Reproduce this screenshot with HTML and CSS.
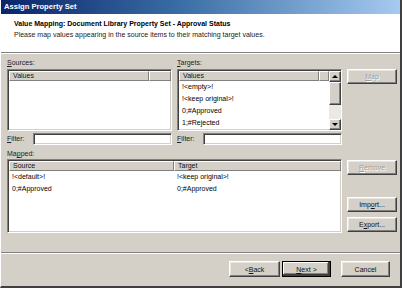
FILE: index.html
```html
<!DOCTYPE html>
<html>
	<head>
		<meta charset="utf-8">
		<title>Assign Property Set</title>
		<link rel="stylesheet" href="styles.css">
	</head>
	<body>
		<div class="window">
			<div class="titlebar">Assign Property Set</div>

			<div class="header">
				<div class="header-title">Value Mapping: Document Library Property Set - Approval Status</div>
				<div class="header-desc">Please map values appearing in the source items to their matching target values.</div>
			</div>

			<div class="content">
				<div class="label"><u>S</u>ources:</div>
				<div class="label"><u>T</u>argets:</div>
				<div></div>

				<div class="listbox">
					<div class="list-head">
						<div class="col" style="width: 140px">Values</div>
						<div class="col col-fill"></div>
					</div>
				</div>
				<div class="listbox listbox-scroll">
					<div class="list-main">
						<div class="list-head">
							<div class="col" style="width: 140px">Values</div>
							<div class="col col-fill"></div>
						</div>
						<div class="rows">
							<div class="row">!&lt;empty&gt;!</div>
							<div class="row">!&lt;keep original&gt;!</div>
							<div class="row">0;#Approved</div>
							<div class="row">1;#Rejected</div>
							<div class="row">0;#Pending</div>
						</div>
					</div>
					<div class="scrollbar">
						<div class="sb-btn"><span class="tri-up"></span></div>
						<div class="sb-thumb"></div>
						<div class="sb-track"></div>
						<div class="sb-btn"><span class="tri-down"></span></div>
					</div>
				</div>
				<div class="side">
					<div class="btn btn-side disabled"><u>M</u>ap</div>
				</div>

				<div class="filter">
					<span class="filter-label"><u>F</u>ilter:</span>
					<div class="input"></div>
				</div>
				<div class="filter">
					<span class="filter-label"><u>F</u>ilter:</span>
					<div class="input"></div>
				</div>
				<div></div>

				<div class="label label-mapped">Ma<u>p</u>ped:</div>
				<div></div>

				<div class="listbox mapped">
					<div class="list-head">
						<div class="col" style="width: 165px">Source</div>
						<div class="col col-fill">Target</div>
					</div>
					<div class="maprow">
						<div class="cell">!&lt;default&gt;!</div>
						<div class="cell">!&lt;keep original&gt;!</div>
					</div>
					<div class="maprow">
						<div class="cell">0;#Approved</div>
						<div class="cell">0;#Approved</div>
					</div>
				</div>
				<div class="side side-mapped">
					<div class="btn btn-side disabled"><u>R</u>emove</div>
					<div class="btn btn-side btn-import">Imp<u>o</u>rt...</div>
					<div class="btn btn-side">E<u>x</u>port...</div>
				</div>
			</div>

			<div class="footer">
				<div class="btn btn-foot btn-back">&lt; <u>B</u>ack</div>
				<div class="btn btn-foot btn-default"><u>N</u>ext &gt;</div>
				<div class="btn btn-foot btn-cancel">Cancel</div>
			</div>
		</div>
	</body>
</html>
```

FILE: styles.css
```css
* {
	margin: 0;
	padding: 0;
	box-sizing: border-box;
}
body {
	width: 402px;
	height: 288px;
	overflow: hidden;
	font-family: "Liberation Sans", Arial, sans-serif;
	font-size: 7px;
	color: #000;
	background-color: #d4d0c8;
}
.window {
	width: 402px;
	height: 288px;
	display: flex;
	flex-direction: column;
	background-color: #d4d0c8;
	border-right: 2px solid #404040;
	border-bottom: 2px solid #404040;
	border-left: 1px solid #fff;
}
.titlebar {
	height: 14px;
	flex: none;
	padding-left: 3px;
	line-height: 14px;
	font-size: 7.6px;
	font-weight: bold;
	color: #fff;
	background: linear-gradient(to right, #0a246a, #3a6ea5 45%, #a6caf0);
}
.header {
	height: 39px;
	flex: none;
	padding: 5px 0 0 13px;
	background-color: #fff;
	border-bottom: 1px solid #808080;
	box-shadow: 0 1px 0 #fff;
}
.header-title {
	font-weight: bold;
	line-height: 10px;
}
.header-desc {
	line-height: 11px;
	color: #222;
}

/* main area */
.content {
	flex: 1;
	display: grid;
	grid-template-columns: 165px 165px 50px;
	grid-template-rows: 12px 62px 18px 10px 74px;
	column-gap: 5px;
	padding: 4px 0 0 6px;
}
.label {
	line-height: 12px;
	color: #222;
}
.label-mapped {
	grid-column: 1 / 3;
	line-height: 9px;
}
.listbox {
	background-color: #fff;
	border: 1px solid;
	border-color: #808080 #fff #fff #808080;
	box-shadow: inset 1px 1px #404040, inset -1px -1px #d4d0c8;
	padding: 1px 0 0 1px;
	overflow: hidden;
}
.listbox-scroll {
	display: flex;
}
.list-main {
	flex: 1;
	display: flex;
	flex-direction: column;
	overflow: hidden;
}
.list-head {
	display: flex;
	height: 10px;
	flex: none;
}
.col {
	flex: none;
	height: 10px;
	line-height: 8px;
	padding-left: 3px;
	background-color: #d4d0c8;
	border: 1px solid;
	border-color: #fff #808080 #808080 #fff;
	color: #111;
	white-space: nowrap;
}
.col-fill {
	flex: 1;
}
.rows {
	flex: 1;
	overflow: hidden;
	padding-top: 1px;
}
.row {
	height: 12px;
	line-height: 10px;
	padding-left: 3px;
	white-space: nowrap;
}
.scrollbar {
	width: 12px;
	flex: none;
	display: flex;
	flex-direction: column;
	background-color: #ebe9e4;
}
.sb-btn,
.sb-thumb {
	height: 11px;
	flex: none;
	display: flex;
	align-items: center;
	justify-content: center;
	background-color: #d4d0c8;
	border: 1px solid;
	border-color: #fff #404040 #404040 #fff;
	box-shadow: inset -1px -1px #808080;
}
.sb-thumb {
	height: 23px;
}
.sb-track {
	flex: 1;
}
.tri-up,
.tri-down {
	width: 0;
	height: 0;
	border-left: 3px solid transparent;
	border-right: 3px solid transparent;
}
.tri-up {
	border-bottom: 3px solid #000;
}
.tri-down {
	border-top: 3px solid #000;
}

.filter {
	display: flex;
	align-items: center;
	padding-top: 2px;
	align-self: start;
}
.filter-label {
	width: 26px;
	flex: none;
	line-height: 12px;
	color: #222;
	white-space: nowrap;
}
.input {
	flex: 1;
	height: 12px;
	background-color: #fff;
	border: 1px solid;
	border-color: #808080 #fff #fff #808080;
	box-shadow: inset 1px 1px #404040, inset -1px -1px #d4d0c8;
}
.mapped {
	grid-column: 1 / 3;
}
.maprow {
	display: flex;
	height: 12px;
	line-height: 12px;
}
.cell {
	padding-left: 3px;
	white-space: nowrap;
}
.cell:first-child {
	width: 165px;
}

/* buttons */
.side {
	display: flex;
	flex-direction: column;
}
.side-mapped {
	padding-top: 1px;
	padding-bottom: 1px;
	gap: 5px;
}
.btn {
	display: flex;
	align-items: center;
	justify-content: center;
	background-color: #d4d0c8;
	border: 1px solid;
	border-color: #fff #404040 #404040 #fff;
	box-shadow: inset -1px -1px #808080, inset 1px 1px #e8e6e1;
	color: #111;
	white-space: nowrap;
}
.btn-side {
	height: 15px;
}
.btn-import {
	margin-top: auto;
}
.disabled {
	color: #a09c94;
	text-shadow: 1px 1px 0 #fff;
}
.footer {
	height: 34px;
	flex: none;
	display: flex;
	align-items: center;
	justify-content: flex-end;
	gap: 2px;
	padding: 0 10px 1px 0;
	border-top: 1px solid #808080;
	box-shadow: inset 0 1px #fff;
}
.btn-foot {
	width: 49px;
	height: 16px;
}
.btn-back {
	width: 51px;
}
.btn-default {
	outline: 1px solid #000;
	outline-offset: -1px;
	box-shadow: inset -2px -2px #404040, inset 1px 1px #fff, inset -3px -3px #808080;
	border-color: #000;
}
.btn-cancel {
	margin-left: 8px;
}
```
